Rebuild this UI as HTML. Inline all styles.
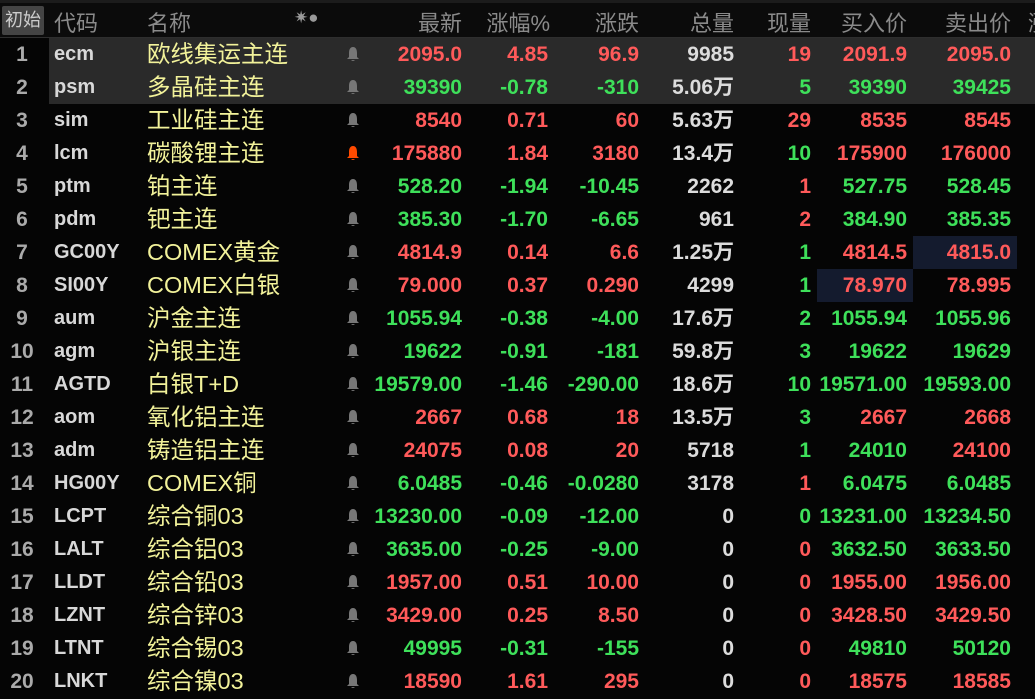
<!DOCTYPE html>
<html><head><meta charset="utf-8"><style>
body{margin:0;width:1035px;height:699px;background:#050505;overflow:hidden;font-family:"Liberation Sans","Noto Sans CJK SC",sans-serif;position:relative}
.top{position:absolute;left:0;top:0;width:1035px;height:3px;background:#1c1c1c}
.hd{position:absolute;left:0;top:3px;width:1035px;height:34px;background:#0b0b0b;border-bottom:1px solid #2e2e2e;color:#8a8a8a;font-size:22px}
.hd span{position:absolute;top:3px;white-space:nowrap}
.btn{left:2px!important;top:3px!important;width:42px;height:29px;background:#444;color:#ccc;font-size:18px;line-height:29px;text-align:center;border-radius:2px}
.r{position:absolute;left:0;width:1035px;height:33px;font-weight:bold;font-size:21px;line-height:33px}
.r.sel{background:linear-gradient(to right,#050505 49px,#2a2a2a 49px)}
.r span{position:absolute;top:0;white-space:nowrap}
.r span:nth-child(1){left:0;width:44px;text-align:center;color:#aaa}
.r span:nth-child(2){left:54px;color:#d8d8d8;font-size:20px}
.r span:nth-child(3){left:147px;color:#f2f29a;font-weight:normal;font-size:23.5px}
.r span:nth-child(4){left:346px;top:8px;width:14px;height:16px;line-height:0}
.r span:nth-child(4) svg{display:block}
.r span:nth-child(5){right:573px}
.r span:nth-child(6){right:487px}
.r span:nth-child(7){right:396px}
.r span:nth-child(8){right:301px;color:#dcdcdc}
.r span:nth-child(9){right:224px}
.r span:nth-child(10){right:128px}
.r span:nth-child(11){right:24px}
.R{color:#ff5a5a!important}.G{color:#3ee05a!important}
.hl{position:absolute;background:#141b2e}
</style></head><body>
<div class="top"></div>
<div class="hd">
<span class="btn">初始</span>
<span style="left:54px">代码</span><span style="left:147px">名称</span>
<span style="left:294px;top:5px;font-size:17px;color:#999">✷●</span>
<span style="right:573px">最新</span><span style="right:485px">涨幅%</span><span style="right:396px">涨跌</span><span style="right:301px">总量</span><span style="right:224px">现量</span><span style="right:128px">买入价</span><span style="right:24px">卖出价</span><span style="left:1028px">涨</span>
</div>
<div class="hl" style="left:913px;top:236px;width:104px;height:33px"></div>
<div class="hl" style="left:817px;top:269px;width:96px;height:33px"></div>
<svg width="0" height="0" style="position:absolute"><defs><symbol id="b" viewBox="0 0 14 16"><path d="M7 1C4 1 3 4 3 7L3 11L1 13L13 13L11 11L11 7C11 4 10 1 7 1Z M5 14Q7 16 9 14Z" fill="currentColor"/></symbol></defs></svg>
<div class="r sel" style="top:38px"><span>1</span><span>ecm</span><span>欧线集运主连</span><span style="color:#777"><svg width="14" height="16"><use href="#b"/></svg></span><span class="R">2095.0</span><span class="R">4.85</span><span class="R">96.9</span><span>9985</span><span class="R">19</span><span class="R">2091.9</span><span class="R">2095.0</span></div>
<div class="r sel" style="top:71px"><span>2</span><span>psm</span><span>多晶硅主连</span><span style="color:#777"><svg width="14" height="16"><use href="#b"/></svg></span><span class="G">39390</span><span class="G">-0.78</span><span class="G">-310</span><span>5.06万</span><span class="G">5</span><span class="G">39390</span><span class="G">39425</span></div>
<div class="r" style="top:104px"><span>3</span><span>sim</span><span>工业硅主连</span><span style="color:#777"><svg width="14" height="16"><use href="#b"/></svg></span><span class="R">8540</span><span class="R">0.71</span><span class="R">60</span><span>5.63万</span><span class="R">29</span><span class="R">8535</span><span class="R">8545</span></div>
<div class="r" style="top:137px"><span>4</span><span>lcm</span><span>碳酸锂主连</span><span style="color:#ff4a00"><svg width="14" height="16"><use href="#b"/></svg></span><span class="R">175880</span><span class="R">1.84</span><span class="R">3180</span><span>13.4万</span><span class="G">10</span><span class="R">175900</span><span class="R">176000</span></div>
<div class="r" style="top:170px"><span>5</span><span>ptm</span><span>铂主连</span><span style="color:#777"><svg width="14" height="16"><use href="#b"/></svg></span><span class="G">528.20</span><span class="G">-1.94</span><span class="G">-10.45</span><span>2262</span><span class="R">1</span><span class="G">527.75</span><span class="G">528.45</span></div>
<div class="r" style="top:203px"><span>6</span><span>pdm</span><span>钯主连</span><span style="color:#777"><svg width="14" height="16"><use href="#b"/></svg></span><span class="G">385.30</span><span class="G">-1.70</span><span class="G">-6.65</span><span>961</span><span class="R">2</span><span class="G">384.90</span><span class="G">385.35</span></div>
<div class="r" style="top:236px"><span>7</span><span>GC00Y</span><span>COMEX黄金</span><span style="color:#777"><svg width="14" height="16"><use href="#b"/></svg></span><span class="R">4814.9</span><span class="R">0.14</span><span class="R">6.6</span><span>1.25万</span><span class="G">1</span><span class="R">4814.5</span><span class="R">4815.0</span></div>
<div class="r" style="top:269px"><span>8</span><span>SI00Y</span><span>COMEX白银</span><span style="color:#777"><svg width="14" height="16"><use href="#b"/></svg></span><span class="R">79.000</span><span class="R">0.37</span><span class="R">0.290</span><span>4299</span><span class="G">1</span><span class="R">78.970</span><span class="R">78.995</span></div>
<div class="r" style="top:302px"><span>9</span><span>aum</span><span>沪金主连</span><span style="color:#777"><svg width="14" height="16"><use href="#b"/></svg></span><span class="G">1055.94</span><span class="G">-0.38</span><span class="G">-4.00</span><span>17.6万</span><span class="G">2</span><span class="G">1055.94</span><span class="G">1055.96</span></div>
<div class="r" style="top:335px"><span>10</span><span>agm</span><span>沪银主连</span><span style="color:#777"><svg width="14" height="16"><use href="#b"/></svg></span><span class="G">19622</span><span class="G">-0.91</span><span class="G">-181</span><span>59.8万</span><span class="G">3</span><span class="G">19622</span><span class="G">19629</span></div>
<div class="r" style="top:368px"><span>11</span><span>AGTD</span><span>白银T+D</span><span style="color:#777"><svg width="14" height="16"><use href="#b"/></svg></span><span class="G">19579.00</span><span class="G">-1.46</span><span class="G">-290.00</span><span>18.6万</span><span class="G">10</span><span class="G">19571.00</span><span class="G">19593.00</span></div>
<div class="r" style="top:401px"><span>12</span><span>aom</span><span>氧化铝主连</span><span style="color:#777"><svg width="14" height="16"><use href="#b"/></svg></span><span class="R">2667</span><span class="R">0.68</span><span class="R">18</span><span>13.5万</span><span class="G">3</span><span class="R">2667</span><span class="R">2668</span></div>
<div class="r" style="top:434px"><span>13</span><span>adm</span><span>铸造铝主连</span><span style="color:#777"><svg width="14" height="16"><use href="#b"/></svg></span><span class="R">24075</span><span class="R">0.08</span><span class="R">20</span><span>5718</span><span class="G">1</span><span class="G">24010</span><span class="R">24100</span></div>
<div class="r" style="top:467px"><span>14</span><span>HG00Y</span><span>COMEX铜</span><span style="color:#777"><svg width="14" height="16"><use href="#b"/></svg></span><span class="G">6.0485</span><span class="G">-0.46</span><span class="G">-0.0280</span><span>3178</span><span class="R">1</span><span class="G">6.0475</span><span class="G">6.0485</span></div>
<div class="r" style="top:500px"><span>15</span><span>LCPT</span><span>综合铜03</span><span style="color:#777"><svg width="14" height="16"><use href="#b"/></svg></span><span class="G">13230.00</span><span class="G">-0.09</span><span class="G">-12.00</span><span>0</span><span class="G">0</span><span class="G">13231.00</span><span class="G">13234.50</span></div>
<div class="r" style="top:533px"><span>16</span><span>LALT</span><span>综合铝03</span><span style="color:#777"><svg width="14" height="16"><use href="#b"/></svg></span><span class="G">3635.00</span><span class="G">-0.25</span><span class="G">-9.00</span><span>0</span><span class="R">0</span><span class="G">3632.50</span><span class="G">3633.50</span></div>
<div class="r" style="top:566px"><span>17</span><span>LLDT</span><span>综合铅03</span><span style="color:#777"><svg width="14" height="16"><use href="#b"/></svg></span><span class="R">1957.00</span><span class="R">0.51</span><span class="R">10.00</span><span>0</span><span class="R">0</span><span class="R">1955.00</span><span class="R">1956.00</span></div>
<div class="r" style="top:599px"><span>18</span><span>LZNT</span><span>综合锌03</span><span style="color:#777"><svg width="14" height="16"><use href="#b"/></svg></span><span class="R">3429.00</span><span class="R">0.25</span><span class="R">8.50</span><span>0</span><span class="R">0</span><span class="R">3428.50</span><span class="R">3429.50</span></div>
<div class="r" style="top:632px"><span>19</span><span>LTNT</span><span>综合锡03</span><span style="color:#777"><svg width="14" height="16"><use href="#b"/></svg></span><span class="G">49995</span><span class="G">-0.31</span><span class="G">-155</span><span>0</span><span class="R">0</span><span class="G">49810</span><span class="G">50120</span></div>
<div class="r" style="top:665px"><span>20</span><span>LNKT</span><span>综合镍03</span><span style="color:#777"><svg width="14" height="16"><use href="#b"/></svg></span><span class="R">18590</span><span class="R">1.61</span><span class="R">295</span><span>0</span><span class="R">0</span><span class="R">18575</span><span class="R">18585</span></div>
</body></html>
